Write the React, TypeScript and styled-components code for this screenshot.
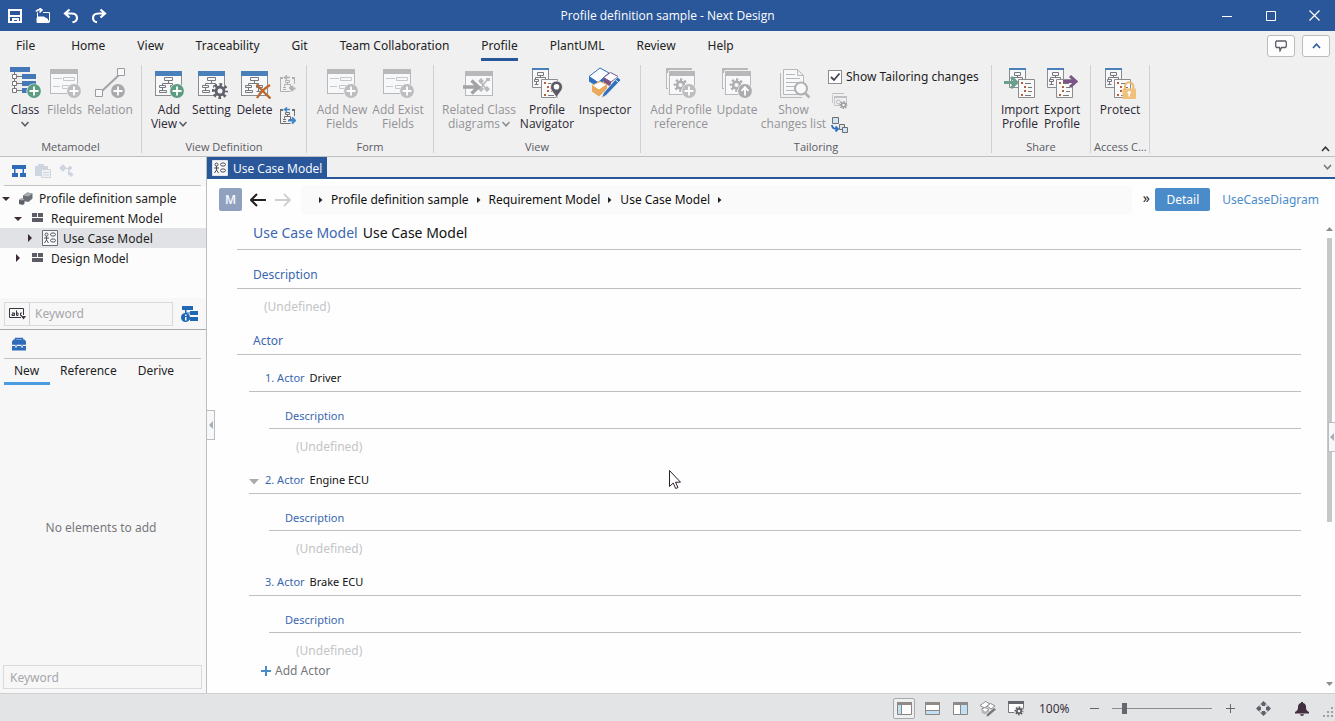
import React from "react";
import styled, { createGlobalStyle } from "styled-components";

const UI_FONT = '"Open Sans", "Noto Sans", sans-serif';
const TEXT_FONT = '"Noto Sans", "Open Sans", sans-serif';

const GlobalStyle = createGlobalStyle`
  *, *::before, *::after { box-sizing: border-box; }
  body { margin: 0; font-family: ${TEXT_FONT}; font-size: 12px; color: #1e1e1e; background: #fefefe; }
  button, input { font: inherit; color: inherit; margin: 0; padding: 0; border: 0; background: none; }
  a { color: inherit; text-decoration: none; }
  svg { display: block; flex: none; }
  h1, h2, h3, p, ul, ol { margin: 0; padding: 0; font-weight: 400; font-size: inherit; list-style: none; }
`;

/* ---------- frame ---------- */

const Window = styled.div`
  display: flex;
  flex-direction: column;
  min-height: 100vh;
`;

const TitleBar = styled.header`
  display: grid;
  grid-template-columns: 1fr auto 1fr;
  align-items: center;
  height: 31px;
  background: #2a579a;
  color: #fff;
  font-family: ${UI_FONT};
`;

const QuickAccess = styled.div`
  display: flex;
  gap: 12px;
  padding-left: 7px;
`;

const CaptionButtons = styled.div`
  display: flex;
  justify-content: flex-end;
`;

const CaptionButton = styled.button`
  display: grid;
  place-items: center;
  width: 44px;
  height: 31px;
  &:last-child { width: 42px; }
`;

const MenuRow = styled.div`
  display: flex;
  align-items: center;
  justify-content: space-between;
  height: 30px;
  padding-right: 5px;
  background: #f0f0f0;
`;

const MenuTabs = styled.nav`
  display: flex;
  gap: 32px;
  padding-left: 16px;
`;

const MenuTab = styled.button<{ $active?: boolean }>`
  height: 30px;
  padding-top: 1px;
  color: #222;
  border-bottom: 3px solid ${(p) => (p.$active ? "#2a579a" : "transparent")};
  &:first-child { margin-right: 4px; }
`;

const MenuActions = styled.div`
  display: flex;
  gap: 7px;
`;

const SmallButton = styled.button`
  display: grid;
  place-items: center;
  width: 28px;
  height: 22px;
  background: #fdfdfd;
  border: 1px solid #bcbcbe;
  border-radius: 3px;
`;

/* ---------- ribbon ---------- */

const Ribbon = styled.div`
  display: flex;
  height: 96px;
  padding-top: 4px;
  background: #f0f0f0;
  border-bottom: 1px solid #bfbfc3;
  font-family: ${UI_FONT};
`;

const RibbonGroup = styled.section<{ $width: number }>`
  display: flex;
  flex-direction: column;
  flex: none;
  width: ${(p) => p.$width}px;
  height: 88px;
  border-right: 1px solid #d0d0d2;
`;

const GroupItems = styled.div`
  display: flex;
  flex: 1;
  justify-content: center;
`;

const GroupLabel = styled.div`
  padding: 0 3px;
  font-size: 11px;
  line-height: 12px;
  color: #5a5a64;
  text-align: center;
  white-space: nowrap;
`;

const RibbonButton = styled.button<{ $width: number }>`
  display: flex;
  flex-direction: column;
  align-items: center;
  justify-content: flex-start;
  flex: none;
  width: ${(p) => p.$width}px;
  padding-top: 2px;
  color: #2b2733;
  line-height: 14px;
  &:disabled { color: #939397; }
`;

const ButtonText = styled.span`
  margin-top: 4px;
  text-align: center;
  white-space: pre;
  & > svg { display: inline-block; vertical-align: 1px; margin-left: 2px; }
`;

const MenuMark = styled.span`
  margin-top: 4px;
`;

const SmallColumn = styled.div`
  display: flex;
  flex-direction: column;
  align-items: center;
  gap: 14px;
  width: 24px;
  padding-top: 10px;
`;

const IconButton = styled.button`
  display: grid;
  place-items: center;
`;

const TailoringColumn = styled.div`
  display: flex;
  flex-direction: column;
  align-items: flex-start;
  gap: 8px;
  width: 157px;
  padding-top: 4px;
  & > button { margin-left: 3px; }
`;

const CheckLabel = styled.label`
  display: flex;
  align-items: center;
  gap: 4px;
  position: relative;
  font-family: ${TEXT_FONT};
  line-height: 16px;
  white-space: nowrap;
`;

const CheckBox = styled.input`
  appearance: none;
  width: 14px;
  height: 14px;
  background: #fff;
  border: 1px solid #8c8c90;
`;

const CheckMark = styled.svg`
  position: absolute;
  left: 0;
  top: 1px;
  pointer-events: none;
`;

const RibbonEnd = styled.div`
  display: flex;
  flex: 1;
  align-items: flex-end;
  justify-content: flex-end;
  padding: 0 4px 4px 0;
`;

/* ---------- side panel ---------- */

const Body = styled.div`
  display: flex;
  flex: 1;
`;

const SidePanel = styled.aside`
  display: flex;
  flex-direction: column;
  flex: none;
  width: 207px;
  background: #f7f7f8;
  border-right: 1px solid #bdbdc0;
`;

const PanelTools = styled.div`
  display: flex;
  align-items: center;
  gap: 8px;
  height: 29px;
  margin: 0 5px 0 4px;
  padding-left: 7px;
  border-bottom: 1px solid #c2c2c5;
`;

const Tree = styled.ul`
  height: 112px;
  padding-top: 2px;
  background: #fcfcfc;
`;

const TreeRow = styled.li<{ $level: number; $selected?: boolean }>`
  display: flex;
  align-items: center;
  height: 20px;
  padding-left: ${(p) => p.$level * 12 + 2}px;
  background: ${(p) => (p.$selected ? "#e1e2e6" : "transparent")};
  white-space: nowrap;
`;

const TreeIcon = styled.span`
  display: grid;
  place-items: center;
  width: 16px;
  margin: 0 5px 0 8px;
`;

const SearchRow = styled.div`
  display: flex;
  align-items: center;
  gap: 8px;
  height: 32px;
  padding: 0 8px 0 4px;
  border-bottom: 1px solid #a9a9ac;
`;

const SearchBox = styled.div`
  display: flex;
  flex: 1;
  min-width: 0;
  height: 24px;
  border: 1px solid #dadadc;
`;

const SearchMode = styled.button`
  display: grid;
  place-items: center;
  flex: none;
  width: 25px;
  border-right: 1px solid #cfcfd2;
`;

const SearchInput = styled.input`
  flex: 1;
  min-width: 0;
  padding-left: 5px;
  &::placeholder { color: #a6a6aa; opacity: 1; }
`;

const PaletteTabs = styled.div`
  display: flex;
  height: 26px;
  padding-left: 4px;
`;

const PaletteTab = styled.button<{ $active?: boolean }>`
  height: 26px;
  padding: 0 11px 0 10px;
  border-bottom: 3px solid ${(p) => (p.$active ? "#4a9be0" : "transparent")};
`;

const PaletteBody = styled.div`
  display: grid;
  place-items: center;
  flex: 1;
  padding: 4px 4px 0 0;
  color: #77777b;
`;

const PaletteFilter = styled.input`
  height: 24px;
  margin: 0 4px 4px 3px;
  padding-left: 6px;
  border: 1px solid #dadadc;
  &::placeholder { color: #a6a6aa; opacity: 1; }
`;

/* ---------- document ---------- */

const DocumentPane = styled.main`
  display: flex;
  flex-direction: column;
  flex: 1;
  min-width: 0;
  position: relative;
  background: #fefefe;
`;

const DocumentTabs = styled.div`
  display: flex;
  align-items: center;
  justify-content: space-between;
  height: 22px;
  padding-right: 3px;
  background: #f0f0f0;
  border-bottom: 2px solid #2a579a;
`;

const DocumentTab = styled.button`
  display: flex;
  align-items: center;
  gap: 5px;
  height: 22px;
  padding: 0 5px;
  background: #2a579a;
  color: #fff;
  font-family: ${UI_FONT};
  align-self: flex-start;
`;

const AddressRow = styled.div`
  display: flex;
  align-items: center;
  height: 38px;
  padding: 3px 16px 0 12px;
`;

const ModeButton = styled.button`
  width: 23px;
  height: 23px;
  margin-right: 8px;
  background: #90a1bf;
  border-radius: 2px;
  color: #f4f6fa;
  font-weight: 600;
`;

const NavButtons = styled.div`
  display: flex;
  gap: 9px;
  margin-right: 10px;
`;

const Breadcrumbs = styled.nav`
  display: flex;
  align-items: center;
  gap: 8px;
  flex: 1;
  height: 30px;
  padding-left: 18px;
  background: #fafafa;
  border-radius: 4px;
  color: #111;
`;

const More = styled.button`
  width: 8px;
  margin: 0 5px 4px 10px;
  font-size: 14px;
  line-height: 16px;
`;

const ViewButton = styled.button<{ $active?: boolean }>`
  height: 23px;
  padding: 0 ${(p) => (p.$active ? "11px" : "0")};
  margin-right: ${(p) => (p.$active ? "12px" : "0")};
  background: ${(p) => (p.$active ? "#4a8bc9" : "transparent")};
  color: ${(p) => (p.$active ? "#fff" : "#4a8bc9")};
  border-radius: 2px;
`;

const Article = styled.article`
  flex: 1;
  padding: 0 34px 12px 30px;
  color: #111;
`;

const Label = styled.span`
  color: #3a67b0;
`;

const Title = styled.h1`
  display: flex;
  gap: 5px;
  padding: 6px 0 6px 16px;
  font-size: 14px;
  line-height: 20px;
  border-bottom: 1px solid #bfbfc0;
`;

const SectionHeading = styled.h2`
  padding: 15px 0 3px 16px;
  line-height: 20px;
  border-bottom: 1px solid #bfbfc0;
`;

const EmptyValue = styled.p`
  padding: 8px 0 0 27px;
  line-height: 20px;
  color: #c4c4c6;
`;

const SectionBody = styled.div`
  margin-bottom: -1px;
`;

const ActorList = styled.ol`
  margin-left: 12px;
`;

const ActorHeading = styled.h2`
  display: flex;
  gap: 5px;
  position: relative;
  padding: 13px 0 3px 16px;
  font-size: 11px;
  line-height: 20px;
  border-bottom: 1px solid #bfbfc0;
`;

const Expander = styled.button`
  position: absolute;
  left: 0;
  top: 22px;
`;

const ActorDetail = styled.div`
  margin-left: 20px;
`;

const FieldHeading = styled.h3`
  padding: 14px 0 2px 16px;
  font-size: 11px;
  line-height: 20px;
  border-bottom: 1px solid #bfbfc0;
`;

const AddButton = styled.button`
  display: flex;
  align-items: center;
  gap: 4px;
  margin-left: 24px;
  line-height: 20px;
  color: #77777b;
`;

const PaneHandle = styled.button<{ $side: "left" | "right" }>`
  position: absolute;
  top: ${(p) => (p.$side === "left" ? 253 : 265)}px;
  ${(p) => (p.$side === "left" ? "left: -1px;" : "right: 0;")}
  display: grid;
  place-items: center;
  width: ${(p) => (p.$side === "left" ? 9 : 7)}px;
  height: 30px;
  background: #f7f8f9;
  border: 1px solid #bcbcbe;
  border-right-width: ${(p) => (p.$side === "left" ? 1 : 0)}px;
`;

const ScrollBar = styled.div`
  position: absolute;
  top: 70px;
  right: 2px;
  bottom: 7px;
  display: flex;
  flex-direction: column;
  justify-content: space-between;
  align-items: center;
  width: 7px;
`;

const ScrollThumb = styled.div`
  width: 5px;
  height: 284px;
  margin: 7px 0 auto;
  background: #c6c7c9;
`;

const Pointer = styled.svg`
  position: absolute;
  left: 462px;
  top: 313px;
`;

/* ---------- status bar ---------- */

const StatusBar = styled.footer`
  display: flex;
  align-items: center;
  justify-content: flex-end;
  height: 28px;
  padding-top: 2px;
  background: #e3e4e6;
  border-top: 1px solid #cfcfd1;
  color: #3a3340;
`;

const StatusButton = styled.button<{ $active?: boolean }>`
  display: grid;
  place-items: center;
  width: 22px;
  height: 21px;
  margin-right: 6px;
  background: ${(p) => (p.$active ? "#eeeff0" : "transparent")};
  border: 1px solid ${(p) => (p.$active ? "#a9a9ac" : "transparent")};
  border-radius: 2px;
`;

const ZoomValue = styled.span`
  width: 55px;
  padding-left: 6px;
`;

const StepButton = styled.button`
  display: grid;
  place-items: center;
  width: 12px;
  height: 20px;
`;

const ZoomSlider = styled.input`
  appearance: none;
  width: 100px;
  height: 12px;
  margin: 0 12px;
  &::-webkit-slider-runnable-track {
    height: 12px;
    background: linear-gradient(#8c8c90, #8c8c90) center / 100% 1px no-repeat;
  }
  &::-webkit-slider-thumb {
    appearance: none;
    width: 5px;
    height: 11px;
    background: #66666e;
  }
`;

const StatusEnd = styled.div`
  display: flex;
  align-items: center;
  gap: 24px;
  padding: 0 14px 0 20px;
`;

const SizeGrip = styled.svg`
  align-self: flex-end;
  margin: 0 1px 3px 0;
`;

/* ---------- drawings ---------- */

const GREY = "#b8b8bb";

const Chevron = ({ up, color = "#5a5a64", w = 8 }: { up?: boolean; color?: string; w?: number }) => (
  <svg width={w} height={6} viewBox="0 0 8 6" fill="none" stroke={color} strokeWidth="1.5">
    <path d={up ? "M.5 5 4 1.2 7.5 5" : "M.5 1 4 4.8 7.5 1"} />
  </svg>
);

const Icon32 = ({ children }: { children: React.ReactNode }) => (
  <svg width="32" height="32" viewBox="0 0 32 32" fill="none">
    {children}
  </svg>
);

const Badge = ({ x, y, color, arrow }: { x: number; y: number; color: string; arrow?: boolean }) => (
  <g transform={`translate(${x} ${y})`}>
    <circle r="7.6" fill="#f0f0f0" />
    <circle r="6.9" fill={color} />
    <path d={arrow ? "M0 4.5V-3.5M-3.5 0 0-3.8 3.5 0" : "M-4.5 0h9M0-4.5v9"} stroke="#fff" strokeWidth="1.8" />
  </g>
);

const Gear = ({ x, y, s = 1, color, hole = "#f5f5f6" }: { x: number; y: number; s?: number; color: string; hole?: string }) => (
  <g transform={`translate(${x} ${y}) scale(${s})`}>
    <circle r="6.4" stroke={color} strokeWidth="3.2" strokeDasharray="2.6 2.426" strokeDashoffset="1.3" />
    <circle r="5.4" fill={color} />
    <circle r="2.5" fill={hole} />
  </g>
);

const FrameShape = ({ x, y, w = 27, h = 25, bar, line = "#8c8c90" }: { x: number; y: number; w?: number; h?: number; bar: string; line?: string }) => (
  <g>
    <rect x={x + 0.5} y={y + 0.5} width={w - 1} height={h - 1} fill="#f7f8f9" stroke={line} />
    <rect x={x} y={y} width={w} height="5" fill={bar} />
  </g>
);

const TreeShape = ({ x, y, color = "#77777c" }: { x: number; y: number; color?: string }) => (
  <path
    transform={`translate(${x} ${y})`}
    stroke={color}
    d="M5.5 1.5h8v3h-8zM9.5 4.5v3M3.5 9.5v-2h10v2M.5 9.5h6v2h-6zM11.5 9.5h6v2h-6zM3.5 11.5v3M.5 14.5h7v2h-7zM13.5 11.5v4M11.5 15.5h6"
  />
);

const ViewIcon = ({ badge }: { badge: "add" | "gear" | "delete" }) => (
  <Icon32>
    <FrameShape x={2} y={4} bar="#4a80b9" />
    <TreeShape x={6} y={9} />
    {badge === "add" && <Badge x={24} y={24} color="#5c9d82" />}
    {badge === "gear" && (
      <g>
        <circle cx="24" cy="24" r="7" fill="#f7f8f9" />
        <Gear x={24} y={24} color="#61616b" />
      </g>
    )}
    {badge === "delete" && (
      <path d="M17.5 17.5c4 4 8 8.5 14 14M31 18c-6 3.5-10 8-13 13" stroke="#ba6a30" strokeWidth="2.4" />
    )}
  </Icon32>
);

const FieldsIcon = () => (
  <Icon32>
    <FrameShape x={1} y={2} w={28} bar={GREY} line={GREY} />
    <path d="M4 11.5h9M4 19.5h7M14.5 10.5h11v3h-11zM13.5 18.5h8v3h-8z" stroke="#c6c8cc" />
    <Badge x={25} y={24} color="#bdbcbf" />
  </Icon32>
);

const ClassIcon = () => (
  <Icon32>
    <path d="M5.5 5v19.5M8 9.5h5M8 16.5h5M8 23.5h5" stroke="#77777c" />
    <path d="M1 0h20v5H1zM13 7h14v5H13zM13 14h14v5H13zM13 21h8v5h-8z" fill="#4478b8" />
    <path d="M3.5 7.5h4v4h-4zM3.5 14.5h4v4h-4zM3.5 21.5h4v4h-4z" fill="#fff" stroke="#77777c" />
    <Badge x={25} y={24} color="#5c9d82" />
  </Icon32>
);

const RelationIcon = () => (
  <Icon32>
    <path d="M8 24 25 8" stroke="#a3a3a9" strokeWidth="2" />
    <path d="M23.5 1.5h7v7h-7zM1.5 22.5h7v7h-7z" fill="#f7f8f9" stroke="#9b9ba0" />
    <Badge x={24} y={24} color="#a9a9ac" />
  </Icon32>
);

const RelatedIcon = () => (
  <Icon32>
    <FrameShape x={2} y={4} w={28} bar={GREY} line={GREY} />
    <path d="m17 14 6 8M24 13l-7 9" stroke={GREY} strokeWidth="1.5" />
    <path d="m18 11 3 3-3 3-3-3zM23 11h4v3h-4zM18 19l3 3-3 3-3-3zM24 19l3 3-3 3-3-3z" fill={GREY} />
    <path d="M0 20h14M8.5 13.5 15.5 20l-7 6.5" stroke="#a3a3a6" strokeWidth="3.4" />
  </Icon32>
);

const DocsShape = ({ x }: { x: number }) => (
  <g transform={`translate(${x} 0)`}>
    <path d="M.5 1.500h16v19H.5z" fill="#f7f8f9" stroke="#8c8c90" />
    <path d="M0 1h17v2H0z" fill="#4a80b9" />
    <path d="M5.500 5.500h6v3h-6zM8.500 8.500v2M3.500 12.500v-2h10v2M2.500 12.500h4v2h-4zM10.500 12.500h4v2h-4zM4.500 14.500v3M2.500 17.500h4" stroke="#77777c" />
    <path d="M9.500 12.500h16v18h-16z" fill="#fafafa" stroke="#8c8c90" />
    <path d="M12 15h2v2h-2zM15 19h2v2h-2zM15 23h2v2h-2zM12 27h2v2h-2z" fill="#b4623a" />
    <path d="M16 16.500h6M19 20.500h4M19 24.500h4M16 28.500h6" stroke="#77777c" />
  </g>
);

const NavigatorIcon = () => (
  <Icon32>
    <DocsShape x={1} />
    <path d="M25.5 31c-2-5-6-7-6-11a6 6 0 0 1 12 0c0 4-4 6-6 11z" fill="#5d5964" stroke="#f5f5f6" strokeWidth=".8" />
    <circle cx="25.5" cy="19.8" r="2.8" fill="#fff" />
  </Icon32>
);

const ArrowHead = ({ x, y, color }: { x: number; y: number; color: string }) => (
  <path transform={`translate(${x} ${y})`} d="M0 5.500h12M7 0l6 5.500-6 5.500" stroke={color} strokeWidth="3" />
);

const ImportIcon = () => (
  <Icon32>
    <DocsShape x={5} />
    <ArrowHead x={0} y={10} color="#6a9f8c" />
  </Icon32>
);

const ExportIcon = () => (
  <Icon32>
    <DocsShape x={1} />
    <ArrowHead x={17} y={9} color="#7b5585" />
  </Icon32>
);

const ProtectIcon = () => (
  <Icon32>
    <DocsShape x={1} />
    <path d="M21 22v-2.500a4.200 4.200 0 0 1 8.400 0V22" stroke="#ecb96f" strokeWidth="2" />
    <rect x="18.500" y="21.500" width="13.500" height="10.500" rx="1" fill="#efc17c" />
    <path d="M25.200 24v5.500M23.500 25.500h3.500" stroke="#fff" strokeWidth="1.600" />
  </Icon32>
);

const InspectorIcon = () => (
  <Icon32>
    <path d="M0 9.500 11 1l9 5-11 9.500z" fill="#fafcff" stroke="#2e6fbf" />
    <path d="M0 9.500 9 15.500V20l-9-5.500zM9 15.500 20 6v2.500L9 20z" fill="#2e6fbf" />
    <path d="M14.500 10.500 21.500 5.500l7.500 4-7 5.500z" fill="#fff" stroke="#7b5585" />
    <path d="m14.500 10.500 7.500 4.500v5l-7.500-4.500z" fill="#7b5585" />
    <path d="m3 18.500 8-4 7 3-8 5.500z" fill="#fff" stroke="#eaa95a" />
    <path d="m3 18.500 7 4.500v6.500l-7-5zM10 23l8-5.500V22l-8 7.500z" fill="#eaa95a" />
    <path d="M28.500 10 32 13 17 28.500 12.500 31l2-5z" fill="#2e6fbf" stroke="#f0f0f0" strokeWidth=".8" />
    <path d="m26.500 13 3 2.500" stroke="#fff" />
  </Icon32>
);

const ReferenceIcon = ({ arrow }: { arrow?: boolean }) => (
  <Icon32>
    <FrameShape x={1} y={1} w={26} h={21} bar={GREY} line={GREY} />
    <path d="M3.500 4v24" stroke="#f0f0f0" />
    <FrameShape x={4} y={4} w={26} h={24} bar={GREY} line={GREY} />
    <path d="M4 3.500h26" stroke="#f0f0f0" />
    <Gear x={15.5} y={18} s={0.85} color="#adadb0" />
    <Badge x={24} y={24} color={arrow ? "#acacaf" : "#bdbcbf"} arrow={arrow} />
  </Icon32>
);

const ChangesIcon = () => (
  <Icon32>
    <path d="M2.500 6v24.500H24" stroke={GREY} />
    <path d="M5.500 2.500h14l6 6v19h-20zM19.500 2.500v6h6" fill="#f7f8f9" stroke={GREY} />
    <path d="M8 7.500h9M8 11.500h14M8 15.500h12M8 19.500h9M8 23.500h9" stroke={GREY} />
    <circle cx="23" cy="21.500" r="6" fill="#f7f8f9" stroke="#b0b0b3" strokeWidth="2" />
    <path d="m27 26 4.500 4.500" stroke="#b0b0b3" strokeWidth="2.500" />
  </Icon32>
);

const MoveViewIcon = ({ off }: { off?: boolean }) => {
  const c = off ? "#b0b0b3" : "#6d6d74";
  const a = off ? "#b0b0b3" : "#3f86c6";
  return (
    <svg width="16" height="18" viewBox="0 0 16 18" fill="none">
      <path d="M.5 3v13.500h10M14.500 3v6" stroke={c} />
      <path d="M0 3h3M12 3h3" stroke={c} strokeWidth="2" />
      <path d="M5 2.500h5M7 .5 4.500 2.500 7 4.500" stroke={a} strokeWidth="1.600" />
      <path d="M5.500 5.500h4v2h-4zM7.500 7.500v2M4.500 11.500v-2h6V12M3 12.500h3M9 12.500h3M3 14.500h3" stroke={c} />
      <path d={off ? "M15.500 13.500H11M13 11l-2.500 2.500L13 16" : "M8 13.500h6M12 10.500l3 3-3 3"} stroke={a} strokeWidth="2" />
    </svg>
  );
};

const SmallGearWindow = () => (
  <svg width="17" height="16" viewBox="0 0 17 16" fill="none">
    <path d="M1.500 2v8M3.500 3.500h12v9h-12z" stroke="#c6c6c9" />
    <path d="M1 0h12v1H1zM3 3h13v2H3z" fill="#c0c0c3" />
    <circle cx="7.500" cy="9" r="2" stroke={GREY} />
    <Gear x={12.500} y={12} s={0.5} color="#9b9b9f" />
  </svg>
);

const CopyDownIcon = () => (
  <svg width="17" height="16" viewBox="0 0 17 16" fill="none" stroke="#6d6d74">
    <path d="M1.500.5h6v6h-6z" fill="#cfe6f6" />
    <path d="M8.500 7.500h5v5h-5z" fill="#dfe3e8" />
    <path d="M11.500 10.500h5v5h-5z" fill="#cfe6f6" />
    <path d="M1 8c0 3 2 4 5 4M4.500 9.500 7 12l-2.500 2.500" stroke="#2e6fbf" strokeWidth="1.800" />
  </svg>
);

const UseCaseIcon = ({ light }: { light?: boolean }) => (
  <svg width="16" height="16" viewBox="0 0 16 16" fill="none" stroke={light ? "#4a4a55" : "#55555f"}>
    <path d="M.5.5h15v15H.5z" fill="#f7f8fa" stroke={light ? "#dfe4ee" : "#6d6d77"} />
    <circle cx="4.500" cy="4.500" r="1.500" />
    <path d="M4.500 6v4M2 8h5M4.500 10 2.500 13M4.500 10l2 3" />
    <ellipse cx="11" cy="4.500" rx="2.500" ry="1.600" />
    <ellipse cx="11" cy="10.500" rx="2.500" ry="1.600" />
  </svg>
);

const ModelIcon = () => (
  <svg width="12" height="10" viewBox="0 0 12 10" fill="#5d5a66">
    <path d="M0 0h5v4H0zM6 0h5v4H6zM0 5h11v4H0z" />
  </svg>
);

const ProjectIcon = () => (
  <svg width="15" height="13" viewBox="0 0 15 13">
    <path d="m4 3.500 4.500-3 5 1v5l-4 3.500-5.500-1z" fill="#6d6f78" />
    <path d="M4 3.500 8.500.5l5 1-4 3z" fill="#a8aab0" />
    <path d="m0 8 2-1.500 3.500.5v4.500L4 13l-4-1z" fill="#5d5f68" />
    <path d="m0 8 2-1.500 3.500.5L4 8.500z" fill="#a8aab0" />
  </svg>
);

const Caret = ({ open, color = "#3b2b38" }: { open?: boolean; color?: string }) => (
  <svg width="8" height="8" viewBox="0 0 8 8" fill={color}>
    <path d={open ? "M0 3h8L4 7z" : "M2 0v8l4-4z"} />
  </svg>
);

const CrumbMark = () => (
  <svg width="4" height="6" viewBox="0 0 4 6" fill="#222">
    <path d="M0 0v6l3.500-3z" />
  </svg>
);

const NavArrow = ({ forward }: { forward?: boolean }) => (
  <svg width="16" height="14" viewBox="0 0 16 14" fill="none" stroke={forward ? "#cfcfd1" : "#222"} strokeWidth={forward ? 1.8 : 2}>
    <path d={forward ? "M0 7h15M9 1l6 6-6 6" : "M16 7H1M7 1 1 7l6 6"} />
  </svg>
);

const StatusFrame = ({ side }: { side: "left" | "bottom" | "right" }) => (
  <svg width="15" height="13" viewBox="0 0 15 13" fill="none" stroke="#8a8583">
    <path d="M.5.5h14v12H.5z" fill="#fff" />
    <path d="M0 0h15v3H0z" fill="#8f8a88" stroke="none" />
    {side === "left" && <path d="M1 3h3v9H1z" fill="#bfe0f5" stroke="none" />}
    {side === "left" && <path d="M4.500 3v9" />}
    {side === "bottom" && <path d="M1 8h13v4H1z" fill="#bfe0f5" stroke="none" />}
    {side === "bottom" && <path d="M1 8.500h13" />}
    {side === "right" && <path d="M8 3h6v9H8z" fill="#bfe0f5" stroke="none" />}
    {side === "right" && <path d="M7.500 3v9" />}
  </svg>
);

/* ---------- parts ---------- */

type Command = {
  label: string;
  icon: React.ReactNode;
  width: number;
  disabled?: boolean;
  menu?: "below" | "inline";
};

const CommandButton = ({ label, icon, width, disabled, menu }: Command) => (
  <RibbonButton $width={width} disabled={disabled}>
    {icon}
    <ButtonText>
      {label}
      {menu === "inline" && <Chevron color={disabled ? "#8a8a90" : undefined} />}
    </ButtonText>
    {menu === "below" && (
      <MenuMark>
        <Chevron />
      </MenuMark>
    )}
  </RibbonButton>
);

const menus = ["File", "Home", "View", "Traceability", "Git", "Team Collaboration", "Profile", "PlantUML", "Review", "Help"];
const actors = ["Driver", "Engine ECU", "Brake ECU"];
const path = ["Profile definition sample", "Requirement Model", "Use Case Model"];

export default function App() {
  return (
    <Window>
      <GlobalStyle />
      <TitleBar>
        <QuickAccess>
          <IconButton aria-label="Save">
            <svg width="16" height="16" viewBox="0 0 16 16" fill="none" stroke="#fff" strokeWidth="2">
              <path d="M2 2h12v12H2zM2 8h12" />
              <path d="M6 14v-3h5v3" />
            </svg>
          </IconButton>
          <IconButton aria-label="Open">
            <svg width="16" height="16" viewBox="0 0 16 16" fill="none" stroke="#fff">
              <path d="M2.500 13V4.500M8 4.500h6.500V14" />
              <path d="M2 14.500V10l1-1h6l2 1.500h1l2 4z" fill="#fff" />
              <path d="M1 3.500c1-1.500 2.500-2 5-2M4.500 0 7 2 4.500 4.500" strokeWidth="1.600" />
            </svg>
          </IconButton>
          <IconButton aria-label="Undo">
            <svg width="16" height="16" viewBox="0 0 16 16" fill="none" stroke="#fff" strokeWidth="2.200">
              <path d="M6.500 1.500 2 5.500l4.500 4M2 5.500h6.500c4 0 5.500 2 5.500 4.500 0 2.500-2 4.200-4.500 4.200" />
            </svg>
          </IconButton>
          <IconButton aria-label="Redo">
            <svg width="16" height="16" viewBox="0 0 16 16" fill="none" stroke="#fff" strokeWidth="2.200">
              <path d="m9.500 1.500 4.500 4-4.500 4M14 5.500H7.500C3.500 5.500 2 7.500 2 10c0 2.500 2 4.200 4 4.200" />
            </svg>
          </IconButton>
        </QuickAccess>
        <h1>Profile definition sample - Next Design</h1>
        <CaptionButtons>
          <CaptionButton aria-label="Minimize">
            <svg width="10" height="10" viewBox="0 0 10 10" stroke="#fff"><path d="M0 5.500h10" /></svg>
          </CaptionButton>
          <CaptionButton aria-label="Maximize">
            <svg width="10" height="10" viewBox="0 0 10 10" fill="none" stroke="#fff"><path d="M.5.5h9v9h-9z" /></svg>
          </CaptionButton>
          <CaptionButton aria-label="Close">
            <svg width="11" height="11" viewBox="0 0 11 11" stroke="#fff" strokeWidth="1.200"><path d="m.5.5 10 10M10.500.5l-10 10" /></svg>
          </CaptionButton>
        </CaptionButtons>
      </TitleBar>

      <MenuRow>
        <MenuTabs>
          {menus.map((name) => (
            <MenuTab key={name} $active={name === "Profile"}>{name}</MenuTab>
          ))}
        </MenuTabs>
        <MenuActions>
          <SmallButton aria-label="Feedback">
            <svg width="12" height="12" viewBox="0 0 12 12" fill="none" stroke="#5d5d68" strokeWidth="1.300">
              <path d="M1.500 1h9l.8 1v4.500l-1 1H6.500L5 10.800 4.500 7.500h-3l-.8-1V2z" />
            </svg>
          </SmallButton>
          <SmallButton aria-label="Collapse">
            <Chevron up color="#2a579a" w={9} />
          </SmallButton>
        </MenuActions>
      </MenuRow>

      <Ribbon>
        <RibbonGroup $width={142}>
          <GroupItems>
            <CommandButton label="Class" icon={<ClassIcon />} width={40} menu="below" />
            <CommandButton label="Filelds" icon={<FieldsIcon />} width={39} disabled />
            <CommandButton label="Relation" icon={<RelationIcon />} width={52} disabled />
          </GroupItems>
          <GroupLabel>Metamodel</GroupLabel>
        </RibbonGroup>
        <RibbonGroup $width={165}>
          <GroupItems>
            <CommandButton label={"Add\nView"} icon={<ViewIcon badge="add" />} width={42} menu="inline" />
            <CommandButton label="Setting" icon={<ViewIcon badge="gear" />} width={43} />
            <CommandButton label="Delete" icon={<ViewIcon badge="delete" />} width={43} />
            <SmallColumn>
              <IconButton aria-label="Move out" disabled><MoveViewIcon off /></IconButton>
              <IconButton aria-label="Move to"><MoveViewIcon /></IconButton>
            </SmallColumn>
          </GroupItems>
          <GroupLabel>View Definition</GroupLabel>
        </RibbonGroup>
        <RibbonGroup $width={127}>
          <GroupItems>
            <CommandButton label={"Add New\nFields"} icon={<FieldsIcon />} width={56} disabled />
            <CommandButton label={"Add Exist\nFields"} icon={<FieldsIcon />} width={56} disabled />
          </GroupItems>
          <GroupLabel>Form</GroupLabel>
        </RibbonGroup>
        <RibbonGroup $width={207}>
          <GroupItems>
            <CommandButton label={"Related Class\ndiagrams"} icon={<RelatedIcon />} width={78} disabled menu="inline" />
            <CommandButton label={"Profile\nNavigator"} icon={<NavigatorIcon />} width={58} />
            <CommandButton label="Inspector" icon={<InspectorIcon />} width={58} />
          </GroupItems>
          <GroupLabel>View</GroupLabel>
        </RibbonGroup>
        <RibbonGroup $width={351}>
          <GroupItems>
            <CommandButton label={"Add Profile\nreference"} icon={<ReferenceIcon />} width={68} disabled />
            <CommandButton label="Update" icon={<ReferenceIcon arrow />} width={44} disabled />
            <CommandButton label={"Show\nchanges list"} icon={<ChangesIcon />} width={69} disabled />
            <TailoringColumn>
              <CheckLabel>
                <CheckBox type="checkbox" defaultChecked />
                <CheckMark width="14" height="14" viewBox="0 0 14 14" fill="none" stroke="#44444c" strokeWidth="1.800">
                  <path d="m3 7 3 3 5.500-6.500" />
                </CheckMark>
                Show Tailoring changes
              </CheckLabel>
              <IconButton aria-label="Tailoring settings" disabled><SmallGearWindow /></IconButton>
              <IconButton aria-label="Apply tailoring"><CopyDownIcon /></IconButton>
            </TailoringColumn>
          </GroupItems>
          <GroupLabel>Tailoring</GroupLabel>
        </RibbonGroup>
        <RibbonGroup $width={99}>
          <GroupItems>
            <CommandButton label={"Import\nProfile"} icon={<ImportIcon />} width={42} />
            <CommandButton label={"Export\nProfile"} icon={<ExportIcon />} width={42} />
          </GroupItems>
          <GroupLabel>Share</GroupLabel>
        </RibbonGroup>
        <RibbonGroup $width={59}>
          <GroupItems>
            <CommandButton label="Protect" icon={<ProtectIcon />} width={46} />
          </GroupItems>
          <GroupLabel>Access C...</GroupLabel>
        </RibbonGroup>
        <RibbonEnd>
          <IconButton aria-label="Collapse ribbon"><Chevron up color="#333" w={11} /></IconButton>
        </RibbonEnd>
      </Ribbon>

      <Body>
        <SidePanel>
          <PanelTools>
            <IconButton aria-label="Model tree">
              <svg width="16" height="14" viewBox="0 0 16 14" fill="#2e6bb8">
                <path d="M1 1h14v4H1zM1 9h6v4H1zM9 9h6v4H9zM3 5h1.500v4H3zM11.500 5H13v4h-1.500z" />
              </svg>
            </IconButton>
            <IconButton aria-label="Copy view" disabled>
              <svg width="16" height="14" viewBox="0 0 16 14" fill="#cdd6de">
                <path d="M0 2h3V0h6v2h4v3H6v7H0z" />
                <path d="M6.500 5.500h9v8h-9zM8 8.500h6M8 11h6" fill="#f0f2f5" stroke="#cdd6de" />
              </svg>
            </IconButton>
            <IconButton aria-label="Relations" disabled>
              <svg width="15" height="14" viewBox="0 0 15 14" fill="#cdd6de" stroke="#cdd6de">
                <path d="m1 4 3-3 3 3-3 3zM6 4.500h7M9.500 4.500v6H12" strokeWidth="1.200" />
                <path d="m9 4 2-2 2 2-2 2zM10 10.500l2-2 2 2-2 2z" />
              </svg>
            </IconButton>
          </PanelTools>
          <Tree>
            <TreeRow $level={0}>
              <Caret open /><TreeIcon><ProjectIcon /></TreeIcon>Profile definition sample
            </TreeRow>
            <TreeRow $level={1}>
              <Caret open /><TreeIcon><ModelIcon /></TreeIcon>Requirement Model
            </TreeRow>
            <TreeRow $level={2} $selected>
              <Caret /><TreeIcon><UseCaseIcon /></TreeIcon>Use Case Model
            </TreeRow>
            <TreeRow $level={1}>
              <Caret /><TreeIcon><ModelIcon /></TreeIcon>Design Model
            </TreeRow>
          </Tree>
          <SearchRow>
            <SearchBox>
              <SearchMode aria-label="Match mode">
                <svg width="17" height="12" viewBox="0 0 17 12" fill="none" stroke="#3b3340">
                  <path d="M12 9.500H.5v-9h14V7" />
                  <path d="M3 5h2.500v2.500H3V6h2M7.500 2.500v5H9V5H7.500M13 5h-1.500v2.500H13" />
                  <path d="M12 8h5l-2.500 3.500z" fill="#3b3340" stroke="none" />
                </svg>
              </SearchMode>
              <SearchInput aria-label="Search model" placeholder="Keyword" />
            </SearchBox>
            <IconButton aria-label="Search details">
              <svg width="17" height="16" viewBox="0 0 17 16" fill="#1f68b5">
                <path d="M1 0h11v4H1zM9 5h8v4H9zM9 11h8v4H9z" />
                <path d="M4 4h1.500v4H4zM5 6.500h4v1H5zM5 12.500h4v1H5z" />
                <circle cx="4.500" cy="11.500" r="4.500" />
                <path d="M4 8.500h1.500V10H4zM4 11h1.500v3.500H4z" fill="#fff" />
              </svg>
            </IconButton>
          </SearchRow>
          <PanelTools>
            <IconButton aria-label="Toolbox">
              <svg width="16" height="14" viewBox="0 0 16 14" fill="#2e6bb8">
                <path d="M4.500 3V1.500h7V3" fill="none" stroke="#2e6bb8" strokeWidth="1.400" />
                <path d="M2.500 2.500h11L15 4.500v3.300H1V4.500zM1 9h3v1.500h2V9h4v1.500h2V9h3v4.500H1z" />
                <path d="M4.500 7.500h1v2h-1zM10.500 7.500h1v2h-1z" />
              </svg>
            </IconButton>
          </PanelTools>
          <PaletteTabs>
            <PaletteTab $active>New</PaletteTab>
            <PaletteTab>Reference</PaletteTab>
            <PaletteTab>Derive</PaletteTab>
          </PaletteTabs>
          <PaletteBody>No elements to add</PaletteBody>
          <PaletteFilter aria-label="Filter elements" placeholder="Keyword" />
        </SidePanel>

        <DocumentPane>
          <DocumentTabs>
            <DocumentTab><UseCaseIcon light />Use Case Model</DocumentTab>
            <IconButton aria-label="Open documents"><Chevron w={9} color="#77777c" /></IconButton>
          </DocumentTabs>
          <AddressRow>
            <ModeButton>M</ModeButton>
            <NavButtons>
              <IconButton aria-label="Back"><NavArrow /></IconButton>
              <IconButton aria-label="Forward" disabled><NavArrow forward /></IconButton>
            </NavButtons>
            <Breadcrumbs aria-label="Breadcrumb">
              <CrumbMark />
              {path.map((name) => (
                <React.Fragment key={name}>
                  <a href="#model">{name}</a>
                  <CrumbMark />
                </React.Fragment>
              ))}
            </Breadcrumbs>
            <More aria-label="More">»</More>
            <ViewButton $active>Detail</ViewButton>
            <ViewButton>UseCaseDiagram</ViewButton>
          </AddressRow>
          <Article>
            <Title><Label>Use Case Model</Label>Use Case Model</Title>
            <SectionHeading><Label>Description</Label></SectionHeading>
            <SectionBody><EmptyValue>(Undefined)</EmptyValue></SectionBody>
            <SectionHeading><Label>Actor</Label></SectionHeading>
            <ActorList>
              {actors.map((name, i) => (
                <li key={name}>
                  <ActorHeading>
                    {i === 1 && (
                      <Expander aria-label="Collapse item">
                        <svg width="10" height="6" viewBox="0 0 10 6" fill="#ababad"><path d="M0 0h10L5 5.500z" /></svg>
                      </Expander>
                    )}
                    <Label>{i + 1}. Actor</Label>{name}
                  </ActorHeading>
                  <ActorDetail>
                    <FieldHeading><Label>Description</Label></FieldHeading>
                    <EmptyValue>(Undefined)</EmptyValue>
                  </ActorDetail>
                </li>
              ))}
            </ActorList>
            <AddButton>
              <svg width="10" height="10" viewBox="0 0 10 10" stroke="#4a8bc9" strokeWidth="2"><path d="M0 5h10M5 0v10" /></svg>
              Add Actor
            </AddButton>
          </Article>
          <PaneHandle $side="left" aria-label="Collapse side panel">
            <svg width="4" height="8" viewBox="0 0 4 8" fill="#a9adb2"><path d="M4 0v8L0 4z" /></svg>
          </PaneHandle>
          <ScrollBar>
            <svg width="7" height="4" viewBox="0 0 7 4" fill="#8c8c90"><path d="M0 4h7L3.500 0z" /></svg>
            <ScrollThumb />
            <svg width="7" height="4" viewBox="0 0 7 4" fill="#8c8c90"><path d="M0 0h7L3.500 4z" /></svg>
          </ScrollBar>
          <PaneHandle $side="right" aria-label="Open inspector panel">
            <svg width="4" height="8" viewBox="0 0 4 8" fill="#a9adb2"><path d="M4 0v8L0 4z" /></svg>
          </PaneHandle>
          <Pointer width="12" height="19" viewBox="0 0 12 19">
            <path d="M.5.5v16l3.700-3.500 2.500 5.500 2.300-1-2.500-5.300h5z" fill="#fff" stroke="#2b1f2b" />
          </Pointer>
        </DocumentPane>
      </Body>

      <StatusBar>
        <StatusButton $active aria-label="Left pane"><StatusFrame side="left" /></StatusButton>
        <StatusButton aria-label="Bottom pane"><StatusFrame side="bottom" /></StatusButton>
        <StatusButton aria-label="Right pane"><StatusFrame side="right" /></StatusButton>
        <StatusButton aria-label="Inspector">
          <svg width="16" height="16" viewBox="0 0 16 16" fill="#fff" stroke="#8a8a8e">
            <path d="m0 4.500 5.500-4 4.500 2.500-5.500 4z" />
            <path d="m7 5 3.500-2.500L15 5l-4 3zM1.500 8 5 6.500l4 2-4 3z" />
            <path d="M1.500 8v3.500l3.500 2v-2zM5 11.500v2l4-3v-2z" fill="#b5b5b8" stroke="none" />
            <path d="m14 7 2 1.500-7.500 6.500-2 .5.500-2.500z" fill="#77777c" stroke="none" />
          </svg>
        </StatusButton>
        <StatusButton aria-label="Window settings">
          <svg width="16" height="15" viewBox="0 0 16 15" fill="none">
            <path d="M.5.5h15v11H.5z" fill="#fff" stroke="#77777c" />
            <path d="M0 0h16v3H0z" fill="#66666e" />
            <circle cx="11" cy="10" r="5" fill="#e9e9eb" />
            <Gear x={11} y={10} s={0.55} color="#55505a" />
          </svg>
        </StatusButton>
        <ZoomValue>100%</ZoomValue>
        <StepButton aria-label="Zoom out">
          <svg width="9" height="9" viewBox="0 0 9 9" stroke="#66666e"><path d="M0 4.500h9" /></svg>
        </StepButton>
        <ZoomSlider type="range" aria-label="Zoom" min={0} max={95} defaultValue={10} />
        <StepButton aria-label="Zoom in">
          <svg width="9" height="9" viewBox="0 0 9 9" stroke="#66666e"><path d="M0 4.500h9M4.500 0v9" /></svg>
        </StepButton>
        <StatusEnd>
          <IconButton aria-label="Fit">
            <svg width="15" height="15" viewBox="0 0 15 15" fill="#61616a">
              <path d="M7.500 0 11 3.500H9.200V5H5.800V3.500H4zM7.500 15 4 11.500h1.800V10h3.400v1.500H11zM0 7.500 3.500 4v1.800H5v3.400H3.500V11zM15 7.500 11.500 11V9.200H10V5.800h1.500V4z" />
            </svg>
          </IconButton>
          <IconButton aria-label="Notifications">
            <svg width="14" height="14" viewBox="0 0 14 14" fill="#43303e">
              <path d="M6 0h2v1c2.200.4 3 2 3 4 0 2.500.5 3.500 3 5v1.500H0V10c2.500-1.500 3-2.500 3-5 0-2 .8-3.600 3-4zM5 12.300h4c0 1-1 1.700-2 1.700s-2-.7-2-1.700z" />
            </svg>
          </IconButton>
        </StatusEnd>
        <SizeGrip width="11" height="11" viewBox="0 0 11 11" fill="#a0a0a4">
          <path d="M8 0h2v2H8zM4 4h2v2H4zM8 4h2v2H8zM0 8h2v2H0zM4 8h2v2H4zM8 8h2v2H8z" />
        </SizeGrip>
      </StatusBar>
    </Window>
  );
}
